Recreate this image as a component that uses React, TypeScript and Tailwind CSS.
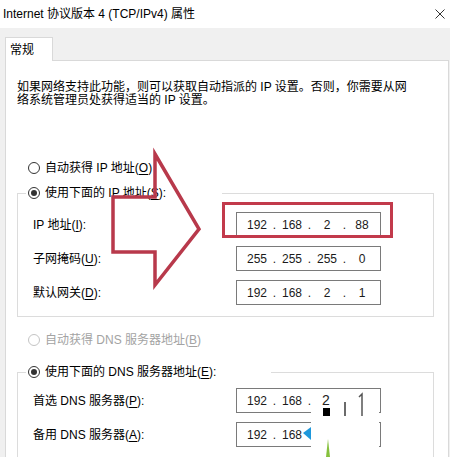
import type { ReactNode } from 'react';

function Radio({ checked, disabled, children }: { checked?: boolean; disabled?: boolean; children: ReactNode }) {
    return (
        <div className={`flex items-center gap-[5px] h-[16px] ${disabled ? 'text-[#a3a3a3]' : 'text-black'}`}>
            <span
                className={`w-[12px] h-[12px] rounded-full border bg-white flex items-center justify-center shrink-0 ${
                    disabled ? 'border-[#c4c4c4]' : 'border-[#333333]'
                }`}
            >
                {checked && <span className="w-[6px] h-[6px] rounded-full bg-[#333333]" />}
            </span>
            <span className="leading-[16px]">{children}</span>
        </div>
    );
}

// parts: octets shown; dots: how many separators are drawn after them
function IpBox({ octets, dots = 3 }: { octets: string[]; dots?: number }) {
    return (
        <div className="w-[145px] h-[25px] border border-[#7a7a7a] bg-white flex items-center pl-[6px] text-[12px] text-[#1a1a1a]">
            {octets.map((o, i) => (
                <span key={i} className="flex">
                    <span className="w-[28px] text-center">{o}</span>
                    {i < dots && <span className="w-[7px] text-center">.</span>}
                </span>
            ))}
        </div>
    );
}

function Row({ label, octets, dots }: { label: ReactNode; octets: string[]; dots?: number }) {
    return (
        <div className="flex items-center">
            <div className="w-[218px] pl-[15px] leading-[16px]">{label}</div>
            <IpBox octets={octets} dots={dots} />
        </div>
    );
}

const U = ({ c }: { c: string }) => <span className="underline underline-offset-2">{c}</span>;

export default function App() {
    return (
        <div className="w-[450px] h-[457px] overflow-hidden bg-[#f0f0f0] relative text-[12px] text-black font-['Liberation_Sans','Noto_Sans_CJK_SC',sans-serif]">
            {/* title bar */}
            <div className="h-[28px] bg-white flex items-center justify-between pl-[3px] pr-[3px]">
                <span className="leading-[16px]">Internet 协议版本 4 (TCP/IPv4) 属性</span>
                <svg width="10" height="10" viewBox="0 0 10 10" className="mr-[2px]">
                    <path d="M0.5 0.5 9.5 9.5M9.5 0.5 0.5 9.5" stroke="#333" strokeWidth="1" />
                </svg>
            </div>

            {/* tabs */}
            <div className="pt-[9px] pl-[5px]">
                <div className="relative z-10 -mb-px w-[48px] h-[24px] bg-white border border-b-0 border-[#d9d9d9] pl-[4px] flex items-center">
                    常规
                </div>
                <div className="w-[444px] h-[420px] bg-white border border-[#d9d9d9] pt-[20px] pl-[11px]">
                    <p className="leading-[13px]">
                        <span className="block">如果网络支持此功能，则可以获取自动指派的 IP 设置。否则，你需要从网</span>
                        <span className="block">络系统管理员处获得适当的 IP 设置。</span>
                    </p>

                    <div className="mt-[53px] ml-[11px]">
                        <Radio>
                            自动获得 IP 地址(<U c="O" />)
                        </Radio>
                    </div>

                    <div className="mt-[17px] w-[417px] border border-[#dcdcdc] pb-[11px]">
                        <div className="-mt-[9px] ml-[8px] w-[196px] pl-[2px] bg-white">
                            <Radio checked>
                                使用下面的 IP 地址(<U c="S" />):
                            </Radio>
                        </div>
                        <div className="mt-[11px] flex flex-col gap-[9px]">
                            <Row label={<>IP 地址(<U c="I" />):</>} octets={['192', '168', '2', '88']} />
                            <Row label={<>子网掩码(<U c="U" />):</>} octets={['255', '255', '255', '0']} />
                            <Row label={<>默认网关(<U c="D" />):</>} octets={['192', '168', '2', '1']} />
                        </div>
                    </div>

                    <div className="mt-[15px] ml-[11px]">
                        <Radio disabled>
                            自动获得 DNS 服务器地址(<U c="B" />)
                        </Radio>
                    </div>

                    <div className="mt-[24px] w-[417px] border border-[#dcdcdc] pb-[40px]">
                        <div className="-mt-[9px] ml-[8px] w-[245px] pl-[2px] bg-white">
                            <Radio checked>
                                使用下面的 DNS 服务器地址(<U c="E" />):
                            </Radio>
                        </div>
                        <div className="mt-[8px] flex flex-col gap-[9px]">
                            <Row label={<>首选 DNS 服务器(<U c="P" />):</>} octets={['192', '168']} dots={2} />
                            <Row label={<>备用 DNS 服务器(<U c="A" />):</>} octets={['192', '168']} dots={1} />
                        </div>
                    </div>
                </div>
            </div>

            {/* red annotation: box around IP field */}
            <div className="absolute left-[222px] top-[202px] w-[171px] h-[36px] border-[3px] border-[#c23a4b]" />

            {/* red annotation: outlined arrow */}
            <svg className="absolute left-0 top-0 pointer-events-none" width="450" height="457">
                <polygon
                    points="155,154 199,229 155,285 155,252 113,252 113,197 155,197"
                    fill="none"
                    stroke="#b8394b"
                    strokeWidth="3.5"
                    strokeLinejoin="miter"
                />
            </svg>

            {/* watermark pasted over the DNS fields */}
            <div className="absolute left-[311px] top-[389px] w-[68px] h-[68px] bg-white" />
            <div className="absolute left-[322px] top-[392px] text-[14px] leading-[16px] text-[#222]">2</div>
            <div className="absolute left-[323px] top-[408px] w-[7px] h-[8px] bg-black" />
            <svg className="absolute left-0 top-0 pointer-events-none" width="450" height="457">
                <line x1="345" y1="402" x2="345" y2="416" stroke="#3a3a3a" strokeWidth="1.5" />
                <path d="M359 397 362 394 362 416" fill="none" stroke="#555" strokeWidth="1.5" />
                <polygon points="303,433 311,427 311,440" fill="#1e98dc" />
                <polygon points="328,439 330,457 326,457" fill="#86c13d" />
            </svg>
        </div>
    );
}
